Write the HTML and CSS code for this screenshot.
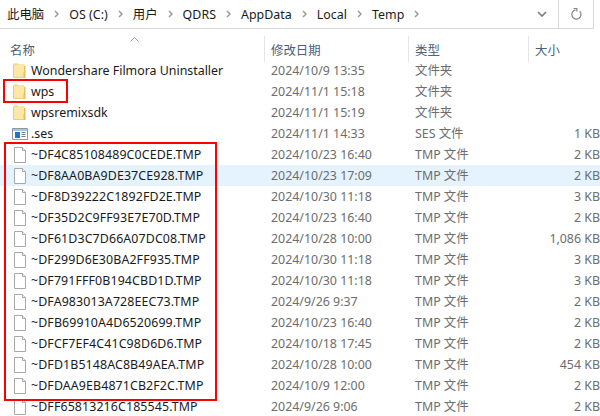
FILE: index.html
```html
<!DOCTYPE html>
<html lang="zh">
<head>
<meta charset="utf-8">
<title>Temp</title>
<link rel="stylesheet" href="styles.css">
</head>
<body>
<svg class="defs" width="0" height="0">
  <symbol id="chev" viewBox="0 0 5 8">
    <path d="M1 1l3 3-3 3" fill="none" stroke="#9a9a9a" stroke-width="1.500"/>
  </symbol>
  <symbol id="folder" viewBox="0 0 16 16">
    <path d="M1.500 1h11v13.500h-11z" fill="#fce8a6"/>
    <path d="M1 1.500h1v13h-1zM2 .5h4v1h-4z" fill="#eecb6c"/>
    <path d="M12 3h1.500v12h-11.500v-.8h10z" fill="#e6c05c"/>
    <path d="M11 9h1v5h-1z" fill="#f2d27a"/>
  </symbol>
  <symbol id="file" viewBox="0 0 16 16">
    <path d="M2.500 .5h8l3 3v12h-11z" fill="#fff" stroke="#a8a8a8"/>
    <path d="M10.500 .5v3h3" fill="#efefef" stroke="#a8a8a8"/>
  </symbol>
  <symbol id="ses" viewBox="0 0 16 16">
    <path d="M.5 2.500h15v11h-15z" fill="#fff" stroke="#8a97a6"/>
    <path d="M1 3h14v2h-14z" fill="#a9c4e0"/>
    <path d="M3 6h5v6h-5z" fill="#1a73d1"/>
    <path d="M9.500 6.500h4M9.500 8.500h4M9.500 10.500h4" stroke="#6f7f90"/>
  </symbol>
</svg>

<header class="addressbar">
  <nav class="crumbs">
    <span>此电脑</span><svg class="sep"><use href="#chev"/></svg>
    <span>OS (C:)</span><svg class="sep"><use href="#chev"/></svg>
    <span>用户</span><svg class="sep"><use href="#chev"/></svg>
    <span>QDRS</span><svg class="sep"><use href="#chev"/></svg>
    <span>AppData</span><svg class="sep"><use href="#chev"/></svg>
    <span>Local</span><svg class="sep"><use href="#chev"/></svg>
    <span>Temp</span><svg class="sep"><use href="#chev"/></svg>
  </nav>
  <div class="dropdown"><svg width="10" height="6" viewBox="0 0 10 6"><path d="M1 1l4 4 4-4" fill="none" stroke="#7a7a7a" stroke-width="1.600"/></svg></div>
  <div class="refresh"><svg width="12" height="13" viewBox="0 0 12 13"><path d="M9.700 3.200a4.600 4.600 0 1 1-4.200-1.300" fill="none" stroke="#8a8a8a" stroke-width="1.300"/><path d="M3.500 .3h3.300v3.300" fill="none" stroke="#8a8a8a" stroke-width="1.300"/></svg></div>
</header>

<main class="list">
  <div class="head">
    <div class="hcell c-name">名称<svg class="sort" width="9" height="5" viewBox="0 0 9 5"><path d="M.5 4.500l4-4 4 4" fill="none" stroke="#9a9a9a"/></svg></div>
    <div class="hcell c-date">修改日期</div>
    <div class="hcell c-type">类型</div>
    <div class="hcell c-size">大小</div>
  </div>

  <div class="row"><div class="c-name n"><svg class="ic"><use href="#folder"/></svg>Wondershare Filmora Uninstaller</div><div class="c-date">2024/10/9 13:35</div><div class="c-type">文件夹</div><div class="c-size"></div></div>
  <div class="row"><div class="c-name n"><svg class="ic"><use href="#folder"/></svg>wps</div><div class="c-date">2024/11/1 15:18</div><div class="c-type">文件夹</div><div class="c-size"></div></div>
  <div class="row"><div class="c-name n"><svg class="ic"><use href="#folder"/></svg>wpsremixsdk</div><div class="c-date">2024/11/1 15:19</div><div class="c-type">文件夹</div><div class="c-size"></div></div>
  <div class="row"><div class="c-name n"><svg class="ic"><use href="#ses"/></svg>.ses</div><div class="c-date">2024/11/1 14:33</div><div class="c-type">SES 文件</div><div class="c-size">1 KB</div></div>
  <div class="row tmp"><div class="c-name n"><svg class="ic"><use href="#file"/></svg>~DF4C85108489C0CEDE.TMP</div><div class="c-date">2024/10/23 16:40</div><div class="c-type">TMP 文件</div><div class="c-size">2 KB</div></div>
  <div class="row tmp hover"><div class="c-name n"><svg class="ic"><use href="#file"/></svg>~DF8AA0BA9DE37CE928.TMP</div><div class="c-date">2024/10/23 17:09</div><div class="c-type">TMP 文件</div><div class="c-size">2 KB</div></div>
  <div class="row tmp"><div class="c-name n"><svg class="ic"><use href="#file"/></svg>~DF8D39222C1892FD2E.TMP</div><div class="c-date">2024/10/30 11:18</div><div class="c-type">TMP 文件</div><div class="c-size">3 KB</div></div>
  <div class="row tmp"><div class="c-name n"><svg class="ic"><use href="#file"/></svg>~DF35D2C9FF93E7E70D.TMP</div><div class="c-date">2024/10/23 16:40</div><div class="c-type">TMP 文件</div><div class="c-size">2 KB</div></div>
  <div class="row tmp"><div class="c-name n"><svg class="ic"><use href="#file"/></svg>~DF61D3C7D66A07DC08.TMP</div><div class="c-date">2024/10/28 10:00</div><div class="c-type">TMP 文件</div><div class="c-size">1,086 KB</div></div>
  <div class="row tmp"><div class="c-name n"><svg class="ic"><use href="#file"/></svg>~DF299D6E30BA2FF935.TMP</div><div class="c-date">2024/10/30 11:18</div><div class="c-type">TMP 文件</div><div class="c-size">3 KB</div></div>
  <div class="row tmp"><div class="c-name n"><svg class="ic"><use href="#file"/></svg>~DF791FFF0B194CBD1D.TMP</div><div class="c-date">2024/10/30 11:18</div><div class="c-type">TMP 文件</div><div class="c-size">3 KB</div></div>
  <div class="row tmp"><div class="c-name n"><svg class="ic"><use href="#file"/></svg>~DFA983013A728EEC73.TMP</div><div class="c-date">2024/9/26 9:37</div><div class="c-type">TMP 文件</div><div class="c-size">2 KB</div></div>
  <div class="row tmp"><div class="c-name n"><svg class="ic"><use href="#file"/></svg>~DFB69910A4D6520699.TMP</div><div class="c-date">2024/10/23 16:40</div><div class="c-type">TMP 文件</div><div class="c-size">2 KB</div></div>
  <div class="row tmp"><div class="c-name n"><svg class="ic"><use href="#file"/></svg>~DFCF7EF4C41C98D6D6.TMP</div><div class="c-date">2024/10/18 17:45</div><div class="c-type">TMP 文件</div><div class="c-size">2 KB</div></div>
  <div class="row tmp"><div class="c-name n"><svg class="ic"><use href="#file"/></svg>~DFD1B5148AC8B49AEA.TMP</div><div class="c-date">2024/10/28 10:00</div><div class="c-type">TMP 文件</div><div class="c-size">454 KB</div></div>
  <div class="row tmp"><div class="c-name n"><svg class="ic"><use href="#file"/></svg>~DFDAA9EB4871CB2F2C.TMP</div><div class="c-date">2024/10/9 12:00</div><div class="c-type">TMP 文件</div><div class="c-size">2 KB</div></div>
  <div class="row tmp"><div class="c-name n"><svg class="ic"><use href="#file"/></svg>~DFF65813216C185545.TMP</div><div class="c-date">2024/9/26 9:06</div><div class="c-type">TMP 文件</div><div class="c-size">2 KB</div></div>
</main>

<div class="mark mark-wps"></div>
<div class="mark mark-tmp"></div>
</body>
</html>
```

FILE: styles.css
```css
* { box-sizing: border-box; }
html, body { margin: 0; padding: 0; }
body {
  width: 600px;
  height: 416px;
  overflow: hidden;
  position: relative;
  background: #fff;
  font-family: "Noto Sans", "Noto Sans CJK SC", sans-serif;
  font-size: 12.400px;
  color: #1a1a1a;
}
.defs { position: absolute; }

.addressbar {
  width: 594px;
  height: 29px;
  display: flex;
  align-items: center;
  border-right: 1px solid #d9d9d9;
  border-bottom: 1px solid #d9d9d9;
}
.crumbs {
  flex: 1;
  display: flex;
  align-items: center;
  gap: 10px;
  padding-left: 7px;
  font-size: 12.400px;
  letter-spacing: .03px;
  color: #1a1a1a;
}
.sep { width: 5px; height: 8px; flex: none; }
.dropdown {
  width: 33px;
  height: 28px;
  display: flex;
  align-items: center;
  justify-content: center;
  border-right: 1px solid #d9d9d9;
}
.refresh {
  width: 34px;
  height: 28px;
  display: flex;
  align-items: center;
  justify-content: center;
}

.list { display: flex; flex-direction: column; padding-top: 7px; }
.head {
  display: flex;
  height: 24px;
  color: #4c607a;
}
.hcell {
  position: relative;
  display: flex;
  align-items: center;
  height: 26px;
  padding-top: 2px;
  border-right: 1px solid #e5e5e5;
}
.c-name { width: 265px; padding-left: 10px; }
.c-date { width: 144px; padding-left: 6px; }
.c-type { width: 120px; padding-left: 6px; }
.c-size { width: 71px; text-align: right; }
.hcell.c-size { border-right: 0; padding-left: 6px; }
.sort { position: absolute; left: 130px; top: 1px; }

.row {
  display: flex;
  height: 21px;
  line-height: 21px;
  color: #6d6d6d;
  white-space: nowrap;
}
.row .n {
  width: 258px;
  margin-left: 7px;
  padding-left: 0;
  display: flex;
  align-items: center;
  color: #1a1a1a;
}
.row.tmp .n { letter-spacing: .11px; }
.ic { width: 16px; height: 16px; margin: 0 3px 0 5px; flex: none; }
.hover { background: #e5f3ff; }
.hover .n { margin-left: 0; width: 265px; padding-left: 7px; }

.mark { position: absolute; border: 2px solid #f00; }
.mark-wps { left: 3px; top: 79px; width: 65px; height: 24px; }
.mark-tmp { left: 4px; top: 142px; width: 213px; height: 259px; }
```
